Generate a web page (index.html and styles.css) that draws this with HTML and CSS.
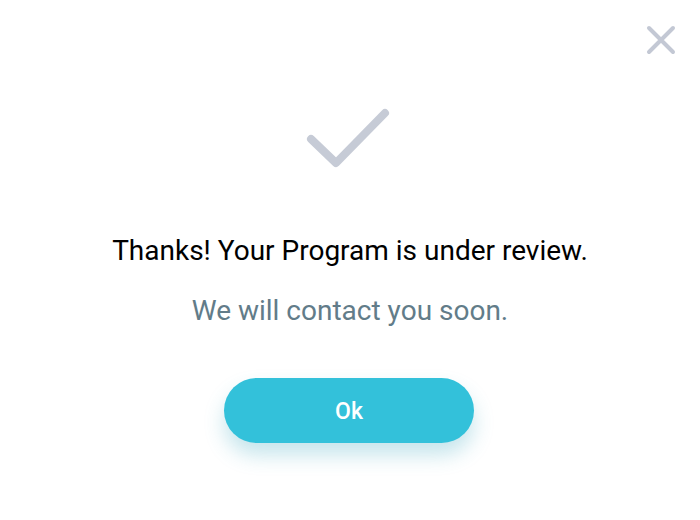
FILE: index.html
```html
<!DOCTYPE html>
<html>
<head>
<meta charset="utf-8">
<link rel="stylesheet" href="styles.css">
</head>
<body>
<div class="dialog">
  <button class="close" aria-label="Close">
    <svg width="30" height="30" viewBox="0 0 30 30"><path d="M3 3 L27 27 M27 3 L3 27" stroke="#c3c8d4" stroke-width="4" stroke-linecap="round" fill="none"/></svg>
  </button>
  <svg class="check" width="90" height="66" viewBox="0 0 90 66"><path d="M9 35 L34 59 L83 9" stroke="#c6cbd6" stroke-width="8" stroke-linecap="round" stroke-linejoin="round" fill="none"/></svg>
  <h1 class="title">Thanks! Your Program is under review.</h1>
  <p class="subtitle">We will contact you soon.</p>
  <button class="ok">Ok</button>
</div>
</body>
</html>
```
FILE: styles.css
```css
html, body {
  margin: 0;
  padding: 0;
  background: #ffffff;
}
.dialog {
  position: relative;
  width: 700px;
  height: 520px;
  display: flex;
  flex-direction: column;
  align-items: center;
  padding-top: 104px;
  box-sizing: border-box;
  font-family: Roboto, "Liberation Sans", sans-serif;
}
.close {
  position: absolute;
  top: 25px;
  left: 646px;
  width: 30px;
  height: 30px;
  padding: 0;
  border: 0;
  background: none;
}
.close svg { display: block; }
.check {
  display: block;
  margin-left: -6px;
}
.title {
  margin: 66px 0 0;
  font-size: 28px;
  font-weight: 400;
  line-height: 30px;
  color: #000;
}
.subtitle {
  margin: 30px 0 0;
  font-size: 28px;
  line-height: 30px;
  color: #627c89;
}
.ok {
  margin-top: 52px;
  margin-left: -2px;
  width: 250px;
  height: 65px;
  padding: 2px 0 0;
  border: 0;
  border-radius: 33px;
  background: #33c1da;
  color: #fff;
  font-family: Roboto, "Liberation Sans", sans-serif;
  font-size: 23px;
  font-weight: 500;
  box-shadow: 0 12px 20px rgba(51, 160, 185, 0.28);
}
```
